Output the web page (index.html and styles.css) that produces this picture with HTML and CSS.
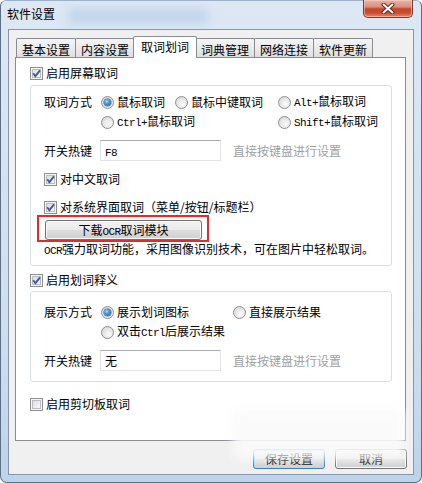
FILE: index.html
```html
<!DOCTYPE html>
<html lang="zh">
<head>
<meta charset="utf-8">
<title>软件设置</title>
<link rel="stylesheet" href="styles.css">
</head>
<body>
<div class="window">
  <div class="titlebar">
    <span class="title">软件设置</span>
    <div class="smudge-title"></div>
    <div class="close">
      <svg width="14" height="11" viewBox="0 0 14 11"><path d="M2.5 1.5 L11.5 9.5 M11.5 1.5 L2.5 9.5" stroke="#5a2a22" stroke-width="4" stroke-linecap="round"/><path d="M2.5 1.5 L11.5 9.5 M11.5 1.5 L2.5 9.5" stroke="#ffffff" stroke-width="2" stroke-linecap="round"/></svg>
    </div>
  </div>
  <div class="client">
    <div class="tabs">
      <div class="tab">基本设置</div>
      <div class="tab">内容设置</div>
      <div class="tab active">取词划词</div>
      <div class="tab">词典管理</div>
      <div class="tab">网络连接</div>
      <div class="tab">软件更新</div>
    </div>
    <div class="panel">
      <div class="check top-check"><span class="cb"><svg width="13" height="13" viewBox="0 0 13 13"><path d="M3.2 6.2 L5.4 9.2 L10 3.3" stroke="#3d5a9c" stroke-width="1.9" fill="none"/></svg></span><span class="txt">启用屏幕取词</span></div>
      <div class="group g1">
        <div class="optgrid grid1">
          <span class="lbl">取词方式</span>
          <span class="radio"><span class="rb on"></span><span class="txt">鼠标取词</span></span>
          <span class="radio"><span class="rb"></span><span class="txt">鼠标中键取词</span></span>
          <span class="radio"><span class="rb"></span><span class="txt"><span class="lat">Alt+</span>鼠标取词</span></span>
          <span></span>
          <span class="radio"><span class="rb"></span><span class="txt"><span class="lat">Ctrl+</span>鼠标取词</span></span>
          <span></span>
          <span class="radio"><span class="rb"></span><span class="txt"><span class="lat">Shift+</span>鼠标取词</span></span>
        </div>
        <div class="hotrow">
          <span class="lbl">开关热键</span>
          <span class="input"><span class="lat">F8</span></span>
          <span class="hint">直接按键盘进行设置</span>
        </div>
        <div class="check in-check c1"><span class="cb"><svg width="13" height="13" viewBox="0 0 13 13"><path d="M3.2 6.2 L5.4 9.2 L10 3.3" stroke="#3d5a9c" stroke-width="1.9" fill="none"/></svg></span><span class="txt">对中文取词</span></div>
        <div class="check in-check c2"><span class="cb"><svg width="13" height="13" viewBox="0 0 13 13"><path d="M3.2 6.2 L5.4 9.2 L10 3.3" stroke="#3d5a9c" stroke-width="1.9" fill="none"/></svg></span><span class="txt">对系统界面取词（菜单/按钮/标题栏）</span></div>
        <div class="ocrwrap">
          <div class="btn ocrbtn">下载<span class="lat">OCR</span>取词模块</div>
          <div class="ocrmark"></div>
        </div>
        <div class="ocrtext"><span class="lat">OCR</span>强力取词功能，采用图像识别技术，可在图片中轻松取词。</div>
      </div>
      <div class="check top-check c3"><span class="cb"><svg width="13" height="13" viewBox="0 0 13 13"><path d="M3.2 6.2 L5.4 9.2 L10 3.3" stroke="#3d5a9c" stroke-width="1.9" fill="none"/></svg></span><span class="txt">启用划词释义</span></div>
      <div class="group g2">
        <div class="optgrid grid2">
          <span class="lbl">展示方式</span>
          <span class="radio"><span class="rb on"></span><span class="txt">展示划词图标</span></span>
          <span class="radio"><span class="rb"></span><span class="txt">直接展示结果</span></span>
          <span></span>
          <span class="radio"><span class="rb"></span><span class="txt">双击<span class="lat">Ctrl</span>后展示结果</span></span>
        </div>
        <div class="hotrow">
          <span class="lbl">开关热键</span>
          <span class="input">无</span>
          <span class="hint">直接按键盘进行设置</span>
        </div>
      </div>
      <div class="check top-check c4"><span class="cb"></span><span class="txt">启用剪切板取词</span></div>
    </div>
    <div class="btnrow">
      <div class="btn default">保存设置</div>
      <div class="btn">取消</div>
    </div>
  </div>
  <div class="smudge-bottom"></div>
</div>
</body>
</html>
```

FILE: styles.css
```css
html, body {
  margin: 0;
  padding: 0;
}
body {
  width: 422px;
  height: 483px;
  overflow: hidden;
  background: #ffffff;
  font-family: "Noto Sans CJK SC", sans-serif;
  font-size: 12px;
  color: #000;
}
.window {
  position: relative;
  box-sizing: border-box;
  width: 422px;
  height: 483px;
  border: 1px solid #5d6f86;
  border-top-color: #9fb2c8;
  border-radius: 6px 6px 7px 7px;
  background: linear-gradient(180deg, #dde8f4 0%, #d6e3f1 30%, #cfdeef 70%, #bcd3ec 100%);
  padding: 0 7px 7px;
  display: flex;
  flex-direction: column;
}
.titlebar {
  position: relative;
  height: 28px;
  display: flex;
  align-items: center;
}
.title {
  margin-left: -1px;
  margin-bottom: 2px;
  line-height: 16px;
}
.smudge-title {
  position: absolute;
  left: 60px;
  top: 7px;
  width: 140px;
  height: 16px;
  background: rgba(175, 200, 228, 0.55);
  filter: blur(5px);
}
.close {
  position: absolute;
  top: -1px;
  right: 1px;
  box-sizing: border-box;
  width: 50px;
  height: 18px;
  border: 1px solid #7b3a2e;
  border-top: none;
  border-radius: 0 0 5px 5px;
  background: linear-gradient(180deg, #eab3a6 0%, #dd8f7b 40%, #c6462c 52%, #c84d31 75%, #e08a6c 100%);
  box-shadow: inset 0 0 0 1px rgba(255, 220, 210, 0.5);
  display: flex;
  align-items: center;
  justify-content: center;
}
.client {
  flex: 1;
  background: #f0f0f0;
  border: 1px solid #8596ac;
  display: flex;
  flex-direction: column;
  padding: 6px 7px 0 6px;
}
.tabs {
  display: flex;
  align-items: flex-end;
  height: 21px;
  padding-left: 1px;
}
.tab {
  box-sizing: border-box;
  width: 60px;
  height: 19px;
  margin-right: -1px;
  border: 1px solid #898c95;
  border-bottom: none;
  border-radius: 2px 2px 0 0;
  background: linear-gradient(180deg, #f4f4f4 0%, #ebebeb 50%, #dedede 100%);
  text-align: center;
  line-height: 18px;
  padding-top: 2px;
  white-space: nowrap;
}
.tab.active {
  position: relative;
  z-index: 1;
  width: 64px;
  height: 22px;
  margin: 0 -2px -1px -1px;
  background: #ffffff;
  padding-top: 1px;
  line-height: 18px;
}
.panel {
  box-sizing: border-box;
  height: 384px;
  background: #ffffff;
  border: 1px solid #898c95;
  display: flex;
  flex-direction: column;
}
.lat {
  font-family: "Liberation Mono", monospace;
  font-size: 11px;
  letter-spacing: -0.6px;
}
.txt {
  white-space: nowrap;
}
.check {
  display: flex;
  align-items: center;
  gap: 3px;
  height: 16px;
  line-height: 16px;
  white-space: nowrap;
}
.top-check {
  margin-left: 14px;
  margin-top: 7px;
}
.top-check.c3 {
  margin-top: 6px;
}
.top-check.c4 {
  margin-top: 14px;
}
.in-check.c1 {
  margin-top: 10px;
}
.in-check.c2 {
  margin-top: 12px;
}
.cb {
  box-sizing: border-box;
  position: relative;
  width: 13px;
  height: 13px;
  flex: none;
  border: 1px solid #8f8f8f;
  background: linear-gradient(135deg, #d7d7d7 0%, #f0f0f0 60%, #ffffff 100%);
  box-shadow: inset 0 0 0 1px #f5f5f5, inset 0 0 0 2px #b9bcc2;
}
.cb svg {
  position: absolute;
  left: -1px;
  top: -1px;
}
.group {
  border: 1px solid #d5dfe5;
  border-radius: 3px;
  box-shadow: inset 0 0 0 1px #ffffff;
  margin: 4px 13px 0 14px;
  padding: 6px 0 6px 13px;
}
.g2 {
  margin-top: 3px;
  padding-top: 10px;
  padding-bottom: 10px;
}
.optgrid {
  display: grid;
  grid-auto-rows: 20px;
  align-items: center;
  white-space: nowrap;
}
.grid1 {
  grid-template-columns: 57px 74px 103px auto;
}
.grid2 {
  grid-template-columns: 57px 132px auto;
}
.lbl {
  line-height: 16px;
}
.radio {
  display: flex;
  align-items: center;
  gap: 3px;
  line-height: 16px;
}
.rb {
  box-sizing: border-box;
  position: relative;
  width: 13px;
  height: 13px;
  flex: none;
  border-radius: 50%;
  border: 1px solid #8e8f8f;
  background: radial-gradient(circle at 60% 65%, #fbfbfb 0%, #e9e9e9 45%, #cfcfcf 100%);
}
.rb.on::after {
  content: "";
  position: absolute;
  left: 2px;
  top: 2px;
  width: 7px;
  height: 7px;
  border-radius: 50%;
  background: radial-gradient(circle at 40% 35%, #b6e0fa 0%, #4a9bd6 35%, #1b5a95 100%);
  box-shadow: 0 0 0 0.5px #2a5f8f;
}
.hotrow {
  display: flex;
  align-items: center;
  margin-top: 8px;
  white-space: nowrap;
}
.hotrow .lbl {
  width: 56px;
}
.input {
  box-sizing: border-box;
  width: 121px;
  height: 21px;
  border: 1px solid #e2e3ea;
  border-top-color: #abadb3;
  border-left-color: #dbdfe6;
  background: #ffffff;
  padding-left: 4px;
  line-height: 19px;
}
.hint {
  margin-left: 12px;
  color: #a0a0a0;
}
.ocrwrap {
  position: relative;
  margin-top: 5px;
  margin-left: 1px;
  width: 157px;
}
.btn {
  box-sizing: border-box;
  height: 20px;
  border: 1px solid #707070;
  border-radius: 3px;
  background: linear-gradient(180deg, #f2f2f2 0%, #ebebeb 48%, #dddddd 52%, #cfcfcf 100%);
  box-shadow: inset 0 0 0 1px #fbfbfb;
  text-align: center;
  line-height: 18px;
  white-space: nowrap;
}
.ocrbtn {
  width: 157px;
}
.ocrmark {
  position: absolute;
  left: -8px;
  top: -5px;
  right: -7px;
  bottom: -2px;
  border: 2px solid #e42a2a;
}
.ocrtext {
  margin-top: 1px;
  line-height: 16px;
  white-space: nowrap;
}
.btnrow {
  display: flex;
  justify-content: flex-end;
  gap: 10px;
  margin-top: 8px;
  margin-right: -1px;
}
.btnrow .btn {
  width: 72px;
}
.btn.default {
  border-color: #3c7fb1;
  box-shadow: inset 0 0 0 1px #9fe2fb;
}
.smudge-bottom {
  position: absolute;
  left: 232px;
  top: 410px;
  width: 172px;
  height: 48px;
  background: rgba(250, 250, 250, 0.9);
  filter: blur(5px);
}
```
